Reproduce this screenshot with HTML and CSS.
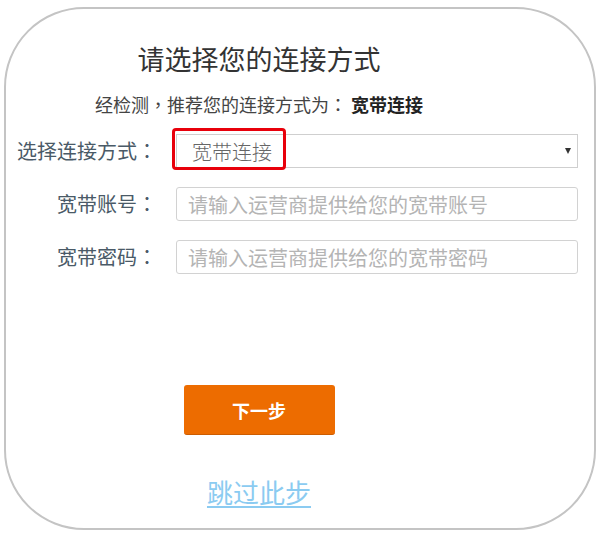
FILE: index.html
```html
<!DOCTYPE html>
<html lang="zh-CN">
<head>
<meta charset="utf-8">
<title>选择连接方式</title>
<link rel="stylesheet" href="styles.css">
</head>
<body>
<div class="card">
  <div class="center">
    <h1 class="title">请选择您的连接方式</h1>
    <p class="sub">经检测<span class="punct" lang="zh-TW">，</span>推荐您的连接方式为<span class="punct" lang="zh-TW">：</span> <b>宽带连接</b></p>
  </div>
  <form class="form">
    <div class="row">
      <label class="label">选择连接方式<span class="punct" lang="zh-TW">：</span></label>
      <div class="field select-wrap">
        <select class="select">
          <option>宽带连接</option>
        </select>
        <span class="arrow"></span>
        <span class="highlight"></span>
      </div>
    </div>
    <div class="row">
      <label class="label">宽带账号<span class="punct" lang="zh-TW">：</span></label>
      <input class="field input" type="text" placeholder="请输入运营商提供给您的宽带账号">
    </div>
    <div class="row">
      <label class="label">宽带密码<span class="punct" lang="zh-TW">：</span></label>
      <input class="field input" type="text" placeholder="请输入运营商提供给您的宽带密码">
    </div>
  </form>
  <div class="center actions">
    <button class="next" type="button">下一步</button>
    <a class="skip" href="#">跳过此步</a>
  </div>
</div>
</body>
</html>
```

FILE: styles.css
```css
html, body {
  margin: 0;
  padding: 0;
  background: #fff;
}

body {
  font-family: "Noto Sans CJK SC", "Noto Sans", sans-serif;
}

.punct {
  font-family: "Noto Sans CJK TC", "Noto Sans CJK SC", sans-serif;
}

.card {
  box-sizing: border-box;
  margin: 7px 0 0 4px;
  width: 592px;
  height: 523px;
  border: 2px solid #c4c4c4;
  border-radius: 80px;
  padding-top: 32px;
}

.center {
  width: 506px;
  text-align: center;
}

.title {
  margin: 0;
  font-size: 27px;
  line-height: 36px;
  font-weight: normal;
  color: #333;
}

.sub {
  margin: 15px 0 0;
  font-size: 18px;
  line-height: 24px;
  color: #444;
}

.sub b {
  color: #222;
  font-weight: bold;
}

.form {
  margin: 18px 0 0;
  display: flex;
  flex-direction: column;
  gap: 19px;
}

.row {
  display: flex;
  align-items: center;
  height: 34px;
}

.label {
  width: 151px;
  text-align: right;
  font-size: 20px;
  line-height: 34px;
  color: #4a5a67;
}

.field {
  box-sizing: border-box;
  margin-left: 19px;
  width: 402px;
  height: 34px;
}

.select-wrap {
  position: relative;
}

.select {
  box-sizing: border-box;
  width: 100%;
  height: 100%;
  margin: 0;
  padding: 0 0 0 15px;
  border: 1px solid #cfcfcf;
  border-radius: 0;
  background: #fff;
  -webkit-appearance: none;
  appearance: none;
  font-family: "Noto Sans CJK SC", sans-serif;
  font-size: 20px;
  font-weight: 300;
  color: #666;
  outline: none;
}

.arrow {
  position: absolute;
  right: 7px;
  top: 14px;
  width: 0;
  height: 0;
  border-left: 3.5px solid transparent;
  border-right: 3.5px solid transparent;
  border-top: 6px solid #333;
  pointer-events: none;
}

.highlight {
  position: absolute;
  left: -4px;
  top: -6px;
  box-sizing: border-box;
  width: 114px;
  height: 42px;
  border: 3px solid #e8000b;
  border-radius: 4px;
  pointer-events: none;
}

.input {
  margin-top: 0;
  margin-bottom: 0;
  padding: 0 0 0 11px;
  border: 1px solid #d2d2d2;
  border-radius: 3px;
  font-family: "Noto Sans CJK SC", sans-serif;
  font-size: 20px;
  color: #333;
  outline: none;
}

.input::placeholder {
  color: #b4b4b4;
}

.actions {
  margin-top: 111px;
  display: flex;
  flex-direction: column;
  align-items: center;
}

.next {
  box-sizing: border-box;
  width: 151px;
  height: 50px;
  margin: 0;
  padding: 0;
  border: none;
  border-bottom: 1px solid #cc5c00;
  border-radius: 3px;
  background: #ed6c00;
  color: #fff;
  font-family: "Noto Sans CJK SC", sans-serif;
  font-size: 18px;
  font-weight: bold;
  cursor: pointer;
}

.skip {
  margin-top: 40px;
  font-size: 26px;
  line-height: 34px;
  color: #8bcbf1;
  text-decoration: underline;
  text-decoration-thickness: 2px;
  text-underline-offset: 3px;
}
```
